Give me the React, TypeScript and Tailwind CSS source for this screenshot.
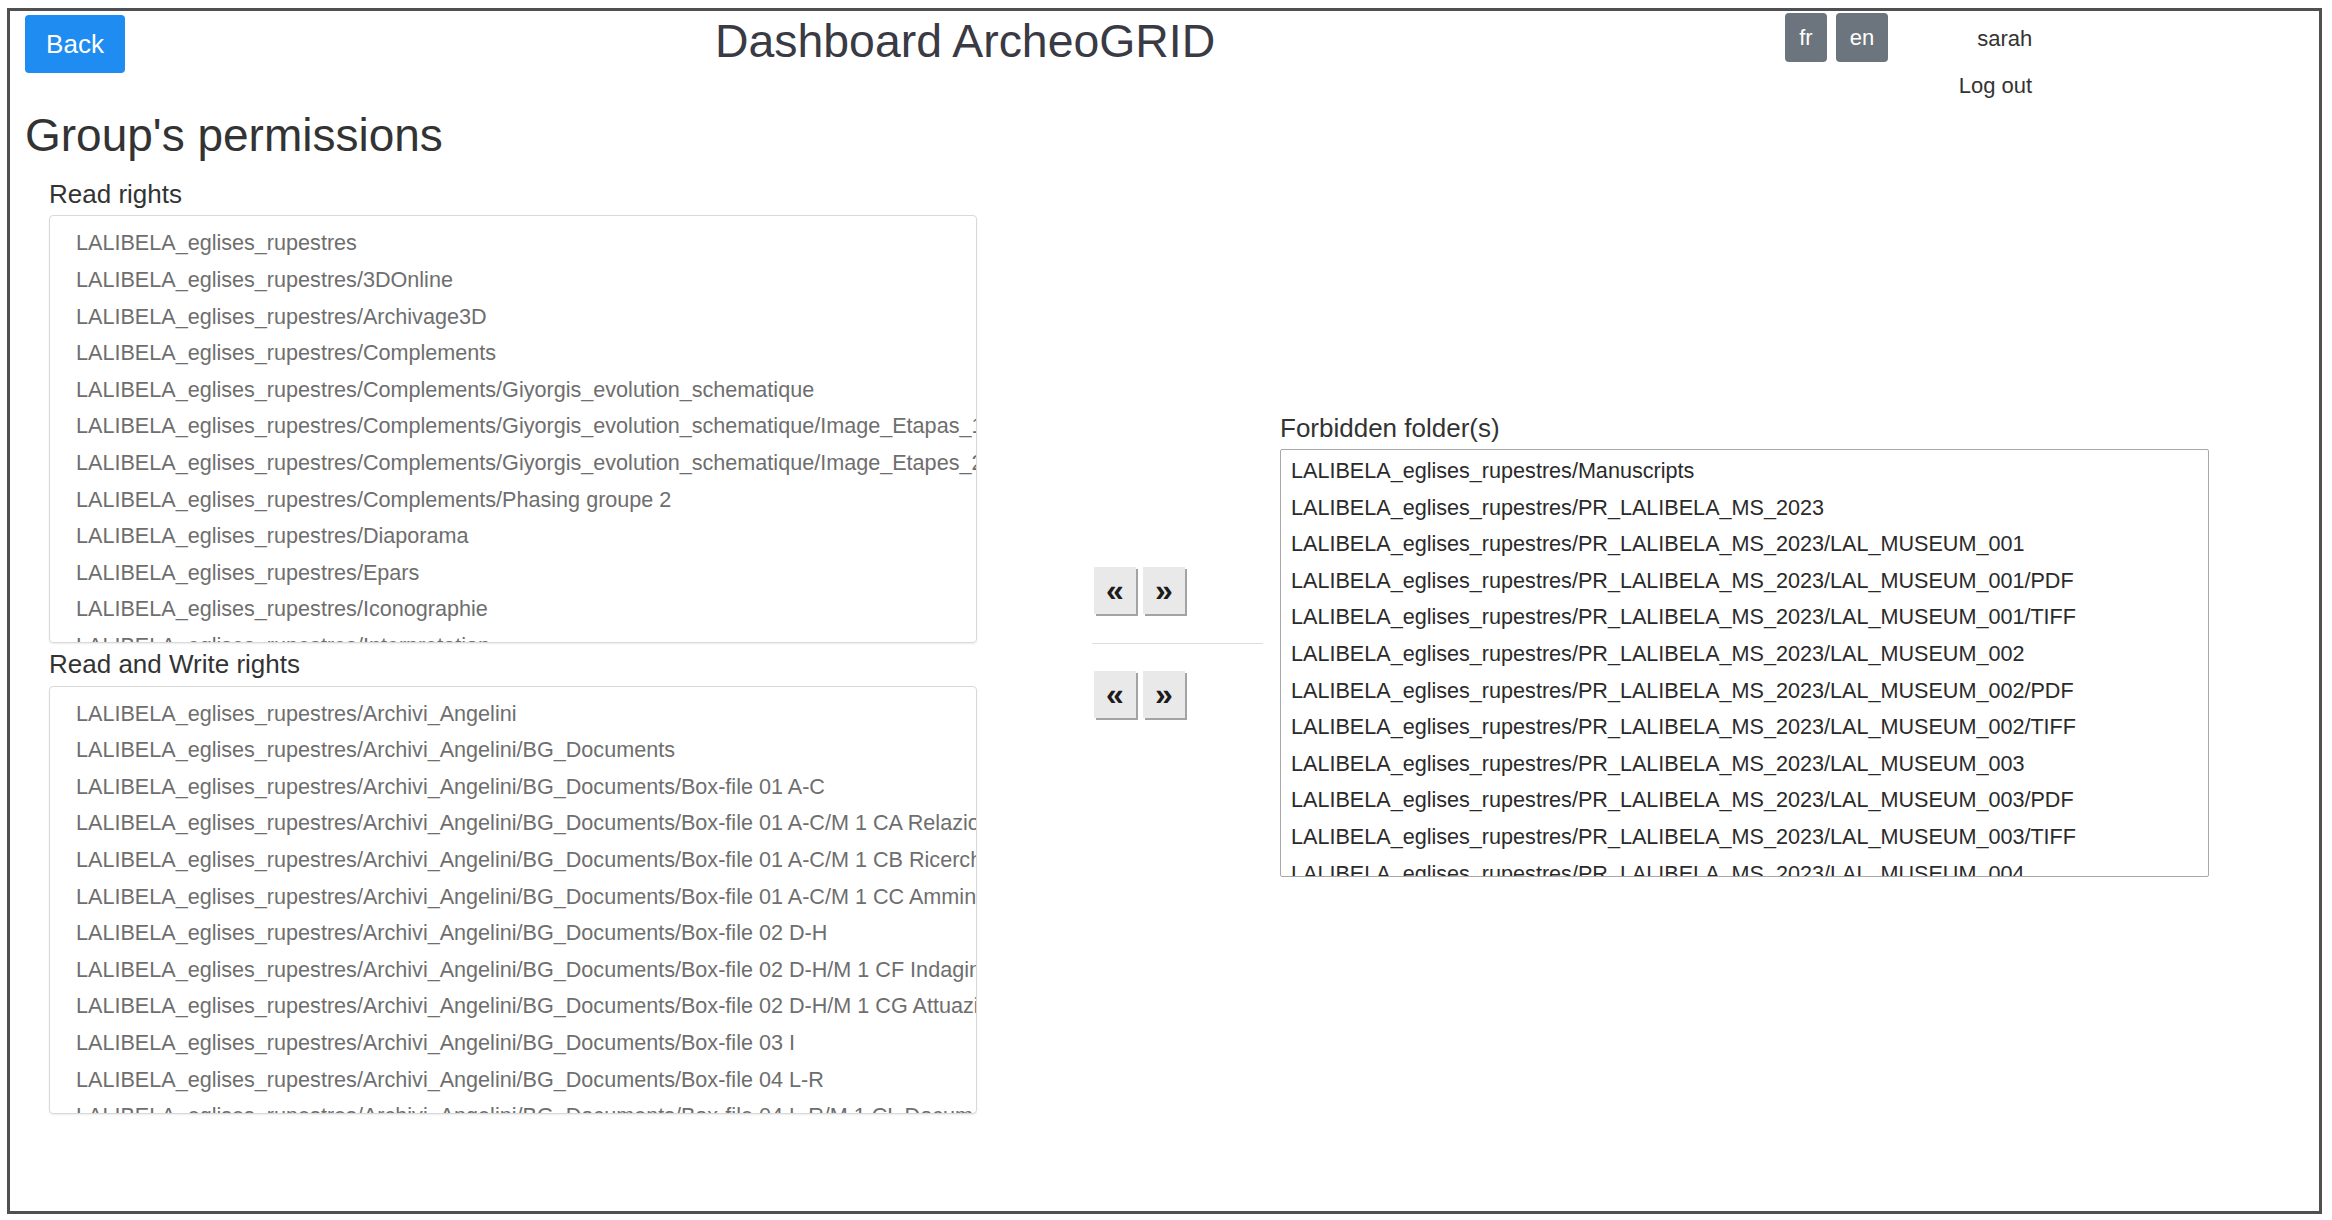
import React from 'react';

const readRights = [
  'LALIBELA_eglises_rupestres',
  'LALIBELA_eglises_rupestres/3DOnline',
  'LALIBELA_eglises_rupestres/Archivage3D',
  'LALIBELA_eglises_rupestres/Complements',
  'LALIBELA_eglises_rupestres/Complements/Giyorgis_evolution_schematique',
  'LALIBELA_eglises_rupestres/Complements/Giyorgis_evolution_schematique/Image_Etapas_1',
  'LALIBELA_eglises_rupestres/Complements/Giyorgis_evolution_schematique/Image_Etapes_2',
  'LALIBELA_eglises_rupestres/Complements/Phasing groupe 2',
  'LALIBELA_eglises_rupestres/Diaporama',
  'LALIBELA_eglises_rupestres/Epars',
  'LALIBELA_eglises_rupestres/Iconographie',
  'LALIBELA_eglises_rupestres/Interpretation',
  'LALIBELA_eglises_rupestres/Lalibela_3D',
];

const bg = 'LALIBELA_eglises_rupestres/Archivi_Angelini/BG_Documents';

const writeRights = [
  'LALIBELA_eglises_rupestres/Archivi_Angelini',
  bg,
  `${bg}/Box-file 01 A-C`,
  `${bg}/Box-file 01 A-C/M 1 CA Relazioni`,
  `${bg}/Box-file 01 A-C/M 1 CB Ricerche`,
  `${bg}/Box-file 01 A-C/M 1 CC Amministrazione`,
  `${bg}/Box-file 02 D-H`,
  `${bg}/Box-file 02 D-H/M 1 CF Indagini`,
  `${bg}/Box-file 02 D-H/M 1 CG Attuazione`,
  `${bg}/Box-file 03 I`,
  `${bg}/Box-file 04 L-R`,
  `${bg}/Box-file 04 L-R/M 1 CL Documenti Fotografici`,
  `${bg}/Box-file 05 S-Z`,
];

const ms = 'LALIBELA_eglises_rupestres/PR_LALIBELA_MS_2023';

const forbidden = [
  'LALIBELA_eglises_rupestres/Manuscripts',
  ms,
  `${ms}/LAL_MUSEUM_001`,
  `${ms}/LAL_MUSEUM_001/PDF`,
  `${ms}/LAL_MUSEUM_001/TIFF`,
  `${ms}/LAL_MUSEUM_002`,
  `${ms}/LAL_MUSEUM_002/PDF`,
  `${ms}/LAL_MUSEUM_002/TIFF`,
  `${ms}/LAL_MUSEUM_003`,
  `${ms}/LAL_MUSEUM_003/PDF`,
  `${ms}/LAL_MUSEUM_003/TIFF`,
  `${ms}/LAL_MUSEUM_004`,
  `${ms}/LAL_MUSEUM_004/PDF`,
];

const FolderBox = ({ items }: { items: string[] }) => (
  <div className="h-[428px] w-[928px] overflow-hidden rounded-[4px] border border-[#d9d9d9] pl-[26px] pt-[9px] shadow-[0_1px_2px_rgba(0,0,0,0.08)]">
    {items.map((item) => (
      <div key={item} className="h-[36.6px] whitespace-nowrap text-[21.6px] leading-[36.6px] text-[#6e6e6e]">
        {item}
      </div>
    ))}
  </div>
);

const ArrowPair = () => (
  <div className="flex gap-[7px] pl-[2px]">
    <button className="h-[47px] w-[42px] bg-[#e9e9e9] text-[32px] font-bold leading-none text-[#1c1c1c] shadow-[2px_2px_0_#a3a3a3]">«</button>
    <button className="h-[47px] w-[42px] bg-[#e9e9e9] text-[32px] font-bold leading-none text-[#1c1c1c] shadow-[2px_2px_0_#a3a3a3]">»</button>
  </div>
);

export default function App() {
  return (
    <div className="min-h-[1220px] bg-white pl-[7px] pt-[8px] font-['Liberation_Sans',Arial,sans-serif]">
      <div className="h-[1206px] w-[2315px] border-[3px] border-[#505050]">
        {/* Header */}
        <div className="flex items-start">
          <button className="ml-[15px] mt-[4px] h-[58px] w-[100px] rounded-[4px] bg-[#1f8cf2] text-[26px] text-white">
            Back
          </button>
          <h1 className="ml-[590px] mt-[3px] text-[46.4px] leading-[1.2] text-[#3a3a44]">Dashboard ArcheoGRID</h1>
          <div className="ml-[570px] mt-[2px] flex gap-[9px]">
            <button className="h-[49px] rounded-[4px] bg-[#6c757d] px-[14px] text-[22px] text-white">fr</button>
            <button className="h-[49px] rounded-[4px] bg-[#6c757d] px-[14px] text-[22px] text-white">en</button>
          </div>
          <div className="ml-[2px] flex w-[142px] flex-col items-end text-[22px] leading-[33px] text-[#333]">
            <span className="mt-[11px]">sarah</span>
            <span className="mt-[14px]">Log out</span>
          </div>
        </div>

        <h2 className="ml-[15px] mt-[6px] text-[46px] leading-[1.2] text-[#333]">Group's permissions</h2>

        {/* Rights */}
        <div className="ml-[39px] mt-[16px] flex items-center">
          <div className="flex flex-col">
            <label className="text-[26px] leading-[1.2] text-[#333]">Read rights</label>
            <div className="mt-[5px]">
              <FolderBox items={readRights} />
            </div>
            <label className="mt-[6px] text-[26px] leading-[1.2] text-[#333]">Read and Write rights</label>
            <div className="mt-[5px]">
              <FolderBox items={writeRights} />
            </div>
          </div>

          <div className="mb-[8px] ml-[115px] flex w-[171px] flex-col">
            <ArrowPair />
            <div className="mt-[29px] h-px bg-[#dedede]" />
            <div className="mt-[27px]">
              <ArrowPair />
            </div>
          </div>

          <div className="mb-[3px] ml-[17px] flex flex-col">
            <label className="text-[26px] leading-[1.2] text-[#333]">Forbidden folder(s)</label>
            <div className="mt-[5px] h-[428px] w-[929px] overflow-hidden rounded-[2px] border border-[#a8a8a8] pl-[10px] pt-[3px]">
              {forbidden.map((item) => (
                <div key={item} className="h-[36.6px] whitespace-nowrap text-[21.6px] leading-[36.6px] text-[#2a2a2a]">
                  {item}
                </div>
              ))}
            </div>
          </div>
        </div>
      </div>
    </div>
  );
}
